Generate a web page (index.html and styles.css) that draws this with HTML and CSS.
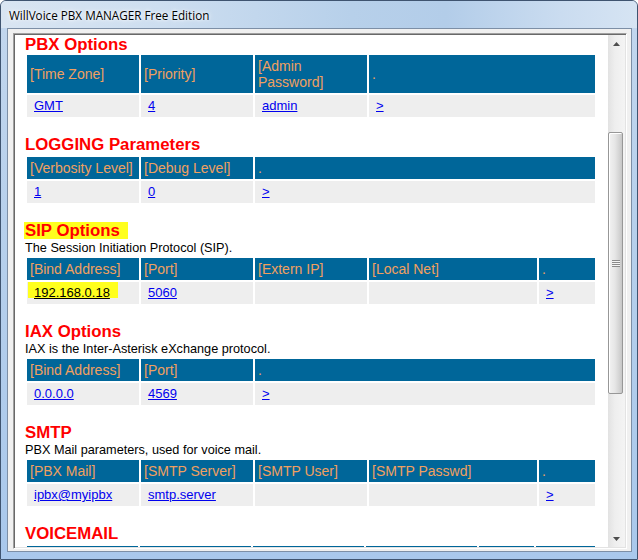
FILE: index.html
```html
<!DOCTYPE html>
<html lang="en">
<head>
    <meta charset="UTF-8">
    <title>WillVoice PBX MANAGER Free Edition</title>
    <link rel="stylesheet" href="styles.css">
</head>
<body>
    <div class="window">
        <!-- title bar -->
        <div class="titlebar">WillVoice PBX MANAGER Free Edition</div>

        <div class="client">
            <div class="frame">
                <!-- page content -->
                <div class="content">
                    <div class="section">
                        <h2 class="title">PBX Options</h2>
                        <table class="grid">
                            <tr>
                                <th class="w112">[Time Zone]</th>
                                <th class="w112">[Priority]</th>
                                <th class="w112">[Admin<br>Password]</th>
                                <th>.</th>
                            </tr>
                            <tr>
                                <td><a href="#">GMT</a></td>
                                <td><a href="#">4</a></td>
                                <td><a href="#">admin</a></td>
                                <td><a href="#">&gt;</a></td>
                            </tr>
                        </table>
                    </div>

                    <div class="section">
                        <h2 class="title">LOGGING Parameters</h2>
                        <table class="grid">
                            <tr>
                                <th class="w112">[Verbosity Level]</th>
                                <th class="w112">[Debug Level]</th>
                                <th>.</th>
                            </tr>
                            <tr>
                                <td><a href="#">1</a></td>
                                <td><a href="#">0</a></td>
                                <td><a href="#">&gt;</a></td>
                            </tr>
                        </table>
                    </div>

                    <div class="section">
                        <h2 class="title"><span class="marker">SIP Options</span></h2>
                        <p class="desc">The Session Initiation Protocol (SIP).</p>
                        <table class="grid">
                            <tr>
                                <th class="w112">[Bind Address]</th>
                                <th class="w112">[Port]</th>
                                <th class="w112">[Extern IP]</th>
                                <th class="w168">[Local Net]</th>
                                <th>.</th>
                            </tr>
                            <tr>
                                <td class="marked"><a href="#">192.168.0.18</a></td>
                                <td><a href="#">5060</a></td>
                                <td></td>
                                <td></td>
                                <td><a href="#">&gt;</a></td>
                            </tr>
                        </table>
                    </div>

                    <div class="section">
                        <h2 class="title">IAX Options</h2>
                        <p class="desc">IAX is the Inter-Asterisk eXchange protocol.</p>
                        <table class="grid">
                            <tr>
                                <th class="w112">[Bind Address]</th>
                                <th class="w112">[Port]</th>
                                <th>.</th>
                            </tr>
                            <tr>
                                <td><a href="#">0.0.0.0</a></td>
                                <td><a href="#">4569</a></td>
                                <td><a href="#">&gt;</a></td>
                            </tr>
                        </table>
                    </div>

                    <div class="section">
                        <h2 class="title">SMTP</h2>
                        <p class="desc">PBX Mail parameters, used for voice mail.</p>
                        <table class="grid">
                            <tr>
                                <th class="w112">[PBX Mail]</th>
                                <th class="w112">[SMTP Server]</th>
                                <th class="w112">[SMTP User]</th>
                                <th class="w168">[SMTP Passwd]</th>
                                <th>.</th>
                            </tr>
                            <tr>
                                <td><a href="#">ipbx@myipbx</a></td>
                                <td><a href="#">smtp.server</a></td>
                                <td></td>
                                <td></td>
                                <td><a href="#">&gt;</a></td>
                            </tr>
                        </table>
                    </div>

                    <!-- only the top edge of this table is in view -->
                    <div class="section">
                        <h2 class="title">VOICEMAIL</h2>
                        <table class="grid">
                            <tr>
                                <th class="w111"></th>
                                <th class="w111"></th>
                                <th class="w111"></th>
                                <th class="w111"></th>
                                <th class="w55"></th>
                                <th></th>
                            </tr>
                        </table>
                    </div>
                </div>

                <!-- vertical scrollbar -->
                <div class="scrollbar">
                    <div class="sb-btn">
                        <svg width="7" height="4" viewBox="0 0 7 4"><path d="M3.5 0 L7 4 L0 4 Z" fill="#4d4d4d"/></svg>
                    </div>
                    <div class="sb-track">
                        <div class="sb-thumb"><span class="sb-grip"></span></div>
                    </div>
                    <div class="sb-btn">
                        <svg width="7" height="4" viewBox="0 0 7 4"><path d="M0 0 L7 0 L3.5 4 Z" fill="#4d4d4d"/></svg>
                    </div>
                </div>
            </div>
        </div>
    </div>
</body>
</html>
```

FILE: styles.css
```css
* {
    box-sizing: border-box;
    margin: 0;
    padding: 0;
}

body {
    width: 638px;
    height: 560px;
    overflow: hidden;
    background: #ffffff;
}

/* window chrome */
.window {
    width: 638px;
    height: 560px;
    display: flex;
    flex-direction: column;
    border: 1px solid #3f5470;
    border-radius: 6px 6px 0 0;
    padding: 0 5px 7px 6px;
    background: linear-gradient(180deg, #c3d7ee 0%, #b7d0ec 40%, #a9c8ec 100%);
}

.titlebar {
    flex: 0 0 27px;
    margin: 0 -5px 0 -6px;
    padding: 6px 0 0 8px;
    font: 11.7px/16px "Open Sans", "Noto Sans", sans-serif;
    color: #000;
    text-shadow: 0 0 6px #ffffff, 0 0 3px #ffffff;
    border-radius: 5px 5px 0 0;
    background: linear-gradient(90deg, #d9e5f2 0%, #cddef0 25%, #b7d0ea 55%, #b3cde9 70%, #cadcf0 88%, #d6e4f3 100%);
}

.client {
    flex: 1;
    min-height: 0;
    display: flex;
    border: 1px solid #7d8fa6;
    background: #f0f0f0;
    padding: 4px 4px 2px 5px;
}

.frame {
    flex: 1;
    min-height: 0;
    display: flex;
    border-top: 1px solid #a0a0a0;
    border-left: 1px solid #a0a0a0;
    border-right: 1px solid #ffffff;
    border-bottom: 1px solid #ffffff;
    box-shadow: inset 1px 1px 0 #696969, inset -1px -1px 0 #e3e3e3;
    padding: 1px;
    overflow: hidden;
}

/* page content */
.content {
    flex: 1;
    min-height: 0;
    background: #ffffff;
    padding-left: 10px;
    overflow: hidden;
}

.section {
    margin-top: 17px;
}

.section:first-child {
    margin-top: 0;
}

.title {
    font: bold 16.8px/18px "Liberation Sans", Arial, sans-serif;
    color: #ff0000;
    margin-bottom: 1px;
}

/* the page is scrolled a little, so the first heading sits tight at the top */
.section:first-child .title {
    line-height: 19px;
    margin-bottom: -1px;
}

.marker {
    display: inline-block;
    height: 17px;
    margin-left: -1px;
    padding: 0 8px 0 1px;
    background: #ffff1e;
}

.desc {
    font: 12.7px/15px "Liberation Sans", Arial, sans-serif;
    color: #000;
}

.grid {
    width: 572px;
    table-layout: fixed;
    border-spacing: 2px;
    font-family: "Liberation Sans", Arial, sans-serif;
}

.grid th {
    background: #006699;
    color: #f0a060;
    font-size: 14px;
    font-weight: normal;
    line-height: 16px;
    height: 22px;
    text-align: left;
    white-space: nowrap;
    padding: 3px 1px 3px 3px;
}

.grid td {
    background: #eeeeee;
    font-size: 13px;
    line-height: 16px;
    height: 22px;
    padding: 3px 1px 3px 7px;
    white-space: nowrap;
}

.grid a {
    color: #0000ee;
}

.grid td.marked {
    background: #eeeeee linear-gradient(#ffff1e, #ffff1e) 1px 0 / 90px 16px no-repeat;
}

.grid td.marked a {
    color: #000;
}

.w112 { width: 112px; }
.w111 { width: 111px; }
.w168 { width: 168px; }
.w55 { width: 55px; }

/* scrollbar */
.scrollbar {
    flex: 0 0 17px;
    display: flex;
    flex-direction: column;
    background: linear-gradient(90deg, #e2e2e2, #eeeeee 40%, #f4f4f4);
}

.sb-btn {
    flex: 0 0 17px;
    display: flex;
    align-items: center;
    justify-content: center;
}

.sb-track {
    flex: 1;
    min-height: 0;
    padding-top: 80px;
}

.sb-thumb {
    height: 262px;
    margin: 0 2px 0 0;
    border: 1px solid #979797;
    border-radius: 2px;
    background: linear-gradient(90deg, #f2f2f2, #e6e6e6 45%, #d3d3d3 80%, #c6c6c6);
    box-shadow: inset 1px 1px 0 #ffffff;
    display: flex;
    align-items: center;
    justify-content: center;
}

.sb-grip {
    width: 8px;
    height: 7px;
    background: repeating-linear-gradient(180deg, #8a8a8a 0 1px, #f4f4f4 1px 2px);
}
```
